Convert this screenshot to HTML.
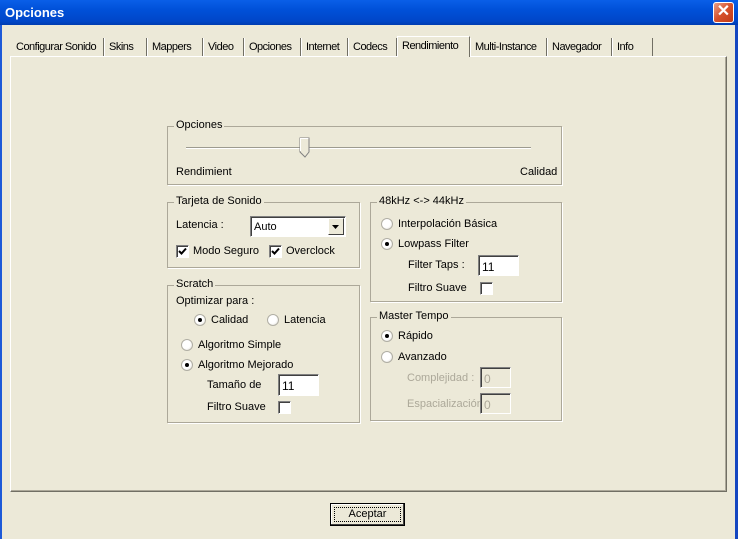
<!DOCTYPE html>
<html><head><meta charset="utf-8"><style>
*{margin:0;padding:0;box-sizing:border-box}
body{width:738px;height:539px;overflow:hidden;background:#ece9d8;font-family:"Liberation Sans",sans-serif;font-size:11px;color:#000;position:relative}
.a{position:absolute;white-space:nowrap}
.title{left:0;top:0;width:738px;height:25px;background:linear-gradient(#0a5fe8,#0050d8 40%,#0046c8 85%,#003cb0);color:#fff;font-weight:bold;font-size:13px;padding:5px 0 0 5px}
.close{left:713px;top:2px;width:21px;height:21px;background:linear-gradient(135deg,#e8a088,#d6502a 50%,#c03a18);border:1px solid #fff;border-radius:3px;color:#fff;font-size:16px;font-weight:bold;text-align:center;line-height:18px}
.bl{left:0;top:25px;width:2px;height:514px;background:#1e5ad8}
.br{left:735px;top:25px;width:3px;height:514px;background:#1446c0}
.panel{left:10px;top:56px;width:717px;height:436px;border:1px solid;border-color:#fff #716f64 #716f64 #fff;box-shadow:inset -1px -1px 0 #aca899}
.tab{top:38px;height:18px;padding:3px 0 0 4px;border-left:1px solid #fff;border-right:1px solid #716f64;overflow:hidden;letter-spacing:-0.5px}
.tab.sel{top:36px;height:21px;background:#ece9d8;border-top:1px solid #fff;z-index:2;padding-top:3px}
.g{border:1px solid #aca899;box-shadow:1px 1px 0 #fff}
.gl{background:#ece9d8;padding:0 2px;top:-8px;left:6px;position:absolute}
.rb{width:12px;height:12px;border-radius:50%;background:radial-gradient(circle at 40% 40%,#fff 50%,#dcdad0);border:1px solid #b0aea4}
.rb.on::after{content:"";position:absolute;left:3px;top:3px;width:4px;height:4px;border-radius:50%;background:#000}
.cb{width:13px;height:13px;background:#fff;border:1px solid;border-color:#808080 #fff #fff #808080;box-shadow:inset 1px 1px 0 #404040}
.ed{background:#fff;border:1px solid;border-color:#808080 #fff #fff #808080;box-shadow:inset 1px 1px 0 #404040;padding:4px 0 0 3px;font-size:12px}
.ed.dis{background:#ece9d8;color:#aca899}
.grey{color:#aca899}
</style></head><body>
<div class="a title">Opciones</div>
<div class="a close">✕</div>
<div class="a bl"></div><div class="a br"></div>
<div class="a panel"></div>
<div class="a tab" style="left:12px;width:92px;border-left:none">Configurar Sonido</div>
<div class="a tab" style="left:104px;width:43px">Skins</div>
<div class="a tab" style="left:147px;width:56px">Mappers</div>
<div class="a tab" style="left:203px;width:41px">Video</div>
<div class="a tab" style="left:244px;width:57px">Opciones</div>
<div class="a tab" style="left:301px;width:47px">Internet</div>
<div class="a tab" style="left:348px;width:49px">Codecs</div>
<div class="a tab sel" style="left:397px;width:73px">Rendimiento</div>
<div class="a tab" style="left:470px;width:77px">Multi-Instance</div>
<div class="a tab" style="left:547px;width:65px">Navegador</div>
<div class="a tab" style="left:612px;width:41px">Info</div>

<div class="a g" style="left:167px;top:126px;width:395px;height:59px"><span class="gl">Opciones</span></div>
<div class="a" style="left:186px;top:147px;width:345px;height:2px;border-top:1px solid #9d9b8f;border-bottom:1px solid #fff"></div>
<svg class="a" style="left:299px;top:137px" width="12" height="22"><path d="M1 1H10V15L6 20L1 15Z" fill="#ece9d8" stroke="#808080"/><path d="M1.5 14V1.5H9.5" stroke="#fff" fill="none"/></svg>
<div class="a" style="left:176px;top:166px">Rendimient</div>
<div class="a" style="left:520px;top:166px">Calidad</div>

<div class="a g" style="left:167px;top:202px;width:193px;height:66px"><span class="gl">Tarjeta de Sonido</span></div>
<div class="a" style="left:176px;top:219px">Latencia :</div>
<div class="a ed" style="left:250px;top:216px;width:96px;height:21px;font-size:11px">Auto</div>
<div class="a" style="left:328px;top:218px;width:16px;height:17px;background:#ece9d8;border:1px solid;border-color:#fff #404040 #404040 #fff"><svg width="14" height="15"><path d="M3 6H10L6.5 10Z" fill="#000"/></svg></div>
<div class="a cb" style="left:176px;top:245px"><svg width="11" height="11" style="position:absolute;left:0;top:0"><path d="M2 5L4.5 7.5L9 2.5" stroke="#000" stroke-width="2" fill="none"/></svg></div><div class="a" style="left:193px;top:245px">Modo Seguro</div>
<div class="a cb" style="left:269px;top:245px"><svg width="11" height="11" style="position:absolute;left:0;top:0"><path d="M2 5L4.5 7.5L9 2.5" stroke="#000" stroke-width="2" fill="none"/></svg></div><div class="a" style="left:286px;top:245px">Overclock</div>

<div class="a g" style="left:370px;top:202px;width:192px;height:100px"><span class="gl">48kHz &lt;-&gt; 44kHz</span></div>
<div class="a rb" style="left:381px;top:218px"></div><div class="a" style="left:398px;top:218px">Interpolación Básica</div>
<div class="a rb on" style="left:381px;top:238px"></div><div class="a" style="left:398px;top:238px">Lowpass Filter</div>
<div class="a" style="left:408px;top:259px">Filter Taps :</div>
<div class="a ed" style="left:478px;top:255px;width:41px;height:21px">11</div>
<div class="a" style="left:408px;top:282px">Filtro Suave</div>
<div class="a cb" style="left:480px;top:282px"></div>

<div class="a g" style="left:167px;top:285px;width:193px;height:138px"><span class="gl">Scratch</span></div>
<div class="a" style="left:176px;top:295px">Optimizar para :</div>
<div class="a rb on" style="left:194px;top:314px"></div><div class="a" style="left:211px;top:314px">Calidad</div>
<div class="a rb" style="left:267px;top:314px"></div><div class="a" style="left:284px;top:314px">Latencia</div>
<div class="a rb" style="left:181px;top:339px"></div><div class="a" style="left:198px;top:339px">Algoritmo Simple</div>
<div class="a rb on" style="left:181px;top:359px"></div><div class="a" style="left:198px;top:359px">Algoritmo Mejorado</div>
<div class="a" style="left:207px;top:379px">Tamaño de</div>
<div class="a ed" style="left:278px;top:374px;width:41px;height:22px">11</div>
<div class="a" style="left:207px;top:401px">Filtro Suave</div>
<div class="a cb" style="left:278px;top:401px"></div>

<div class="a g" style="left:370px;top:317px;width:192px;height:104px"><span class="gl">Master Tempo</span></div>
<div class="a rb on" style="left:381px;top:330px"></div><div class="a" style="left:398px;top:330px">Rápido</div>
<div class="a rb" style="left:381px;top:351px"></div><div class="a" style="left:398px;top:351px">Avanzado</div>
<div class="a grey" style="left:407px;top:372px">Complejidad :</div>
<div class="a ed dis" style="left:480px;top:367px;width:31px;height:21px">0</div>
<div class="a grey" style="left:407px;top:398px">Espacialización</div>
<div class="a ed dis" style="left:480px;top:393px;width:31px;height:21px">0</div>

<div class="a" style="left:330px;top:503px;width:75px;height:23px;border:1px solid #000;background:#ece9d8;box-shadow:inset -1px -1px 0 #404040,inset 1px 1px 0 #fff"><div style="margin:3px;height:15px;border:1px dotted #000;text-align:center;line-height:13px">Aceptar</div></div>
</body></html>
